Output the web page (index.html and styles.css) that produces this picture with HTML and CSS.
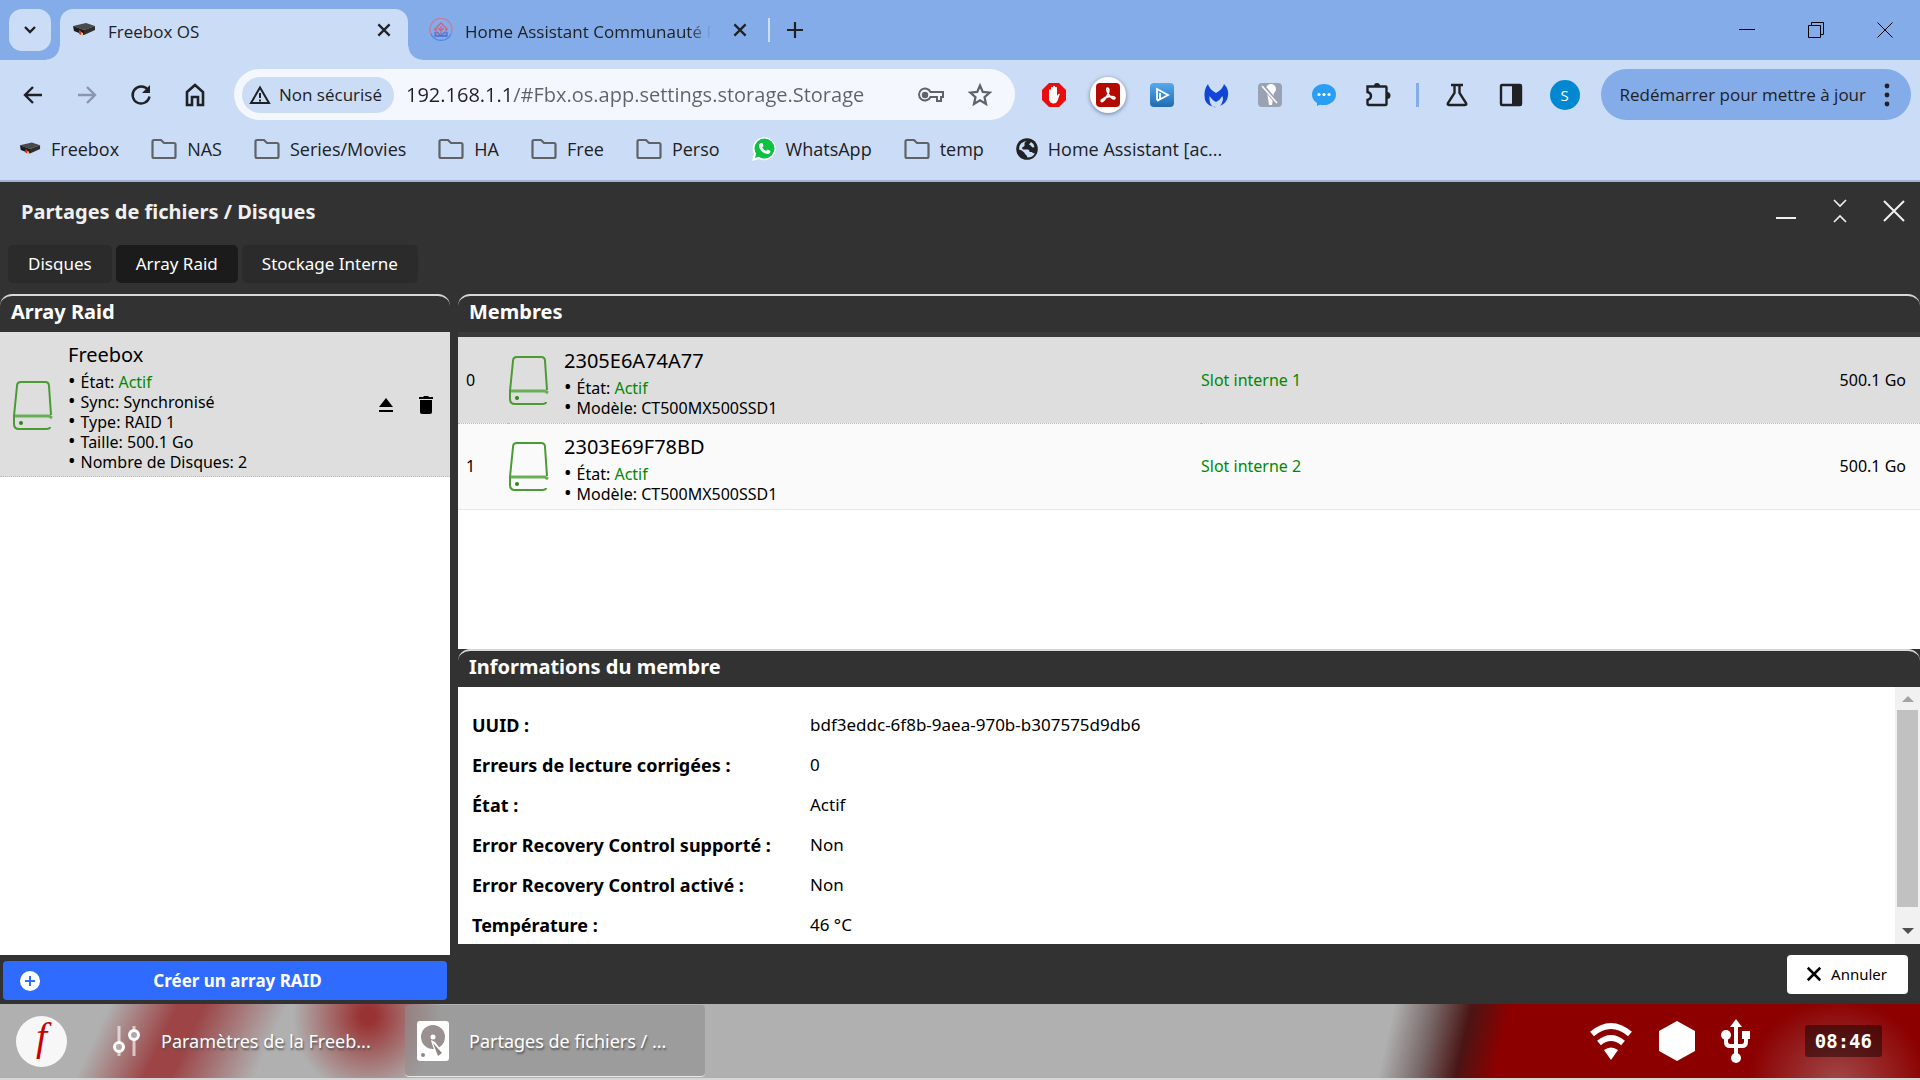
FILE: index.html
```html
<!DOCTYPE html>
<html lang="fr">
<head>
    <meta charset="UTF-8">
    <meta name="viewport" content="width=device-width, initial-scale=1.0">
    <title>Freebox OS</title>
    <link rel="stylesheet" href="styles.css">
</head>
<body>

    <!-- shared icons -->
    <svg class="defs" width="0" height="0">
        <symbol id="folder" viewBox="0 0 26 24">
            <path d="M3 3h7l3 3h10q1.500 0 1.500 1.500v12q0 1.500-1.500 1.500h-20q-1.500 0-1.500-1.500v-15q0-1.500 1.500-1.500z" fill="none" stroke="#5f6368" stroke-width="2.200"/>
        </symbol>
        <symbol id="box" viewBox="0 0 24 16">
            <path d="M1 4l13-3 9 3-11 4z" fill="#4a4a4a"/>
            <path d="M1 4l11 4v5l-10-4z" fill="#1c1c1c"/>
            <path d="M12 8l11-4v4l-11 5z" fill="#2e2e2e"/>
            <path d="M7 8l2 1v4l-2-1z" fill="#c33"/>
            <path d="M9 10l2 1v3l-2-1z" fill="#f0c030"/>
        </symbol>
        <symbol id="cross" viewBox="0 0 16 16">
            <path d="M3 3l10 10M13 3l-10 10" fill="none" stroke="currentColor" stroke-width="2"/>
        </symbol>
        <symbol id="disk" viewBox="0 0 42 50">
            <path d="M39 35L37 6q0-4-4-4H9q-4 0-4 4L2 36v8q0 5 5 5h27q4 0 4-2" fill="none" stroke="#4a9b34" stroke-width="2"/>
            <path d="M3 36h34l3 2" fill="none" stroke="#6aae58" stroke-width="3"/>
            <circle cx="9" cy="43" r="2" fill="#2a8a14"/>
        </symbol>
    </svg>

    <div class="tabstrip">
        <button class="tab-search" aria-label="Rechercher des onglets">
            <svg width="16" height="16" viewBox="0 0 16 16"><path d="M3 5l5 5 5-5" fill="none" stroke="currentColor" stroke-width="2.400"/></svg>
        </button>
        <div class="tab active">
            <svg width="24" height="16"><use href="#box"/></svg>
            <span class="tab-title">Freebox OS</span>
            <button class="icon-btn" aria-label="Fermer"><svg width="18" height="18"><use href="#cross"/></svg></button>
        </div>
        <div class="tab">
            <svg width="24" height="24" viewBox="0 0 24 24" fill="none" stroke-width="1.300">
                <path d="M2 16a11 11 0 1 1 20 0" stroke="#c97a96"/>
                <path d="M2 16a11 11 0 0 0 20 0" stroke="#4a86e8"/>
                <path d="M5 12l7-7 7 7M7 11v7h10v-7M9 10l3 3 3-3M12 8v9" stroke="#d0607c"/>
                <path d="M6 14v4h12v-4M12 18l-4-4M12 18l4-4" stroke="#3f7be0"/>
            </svg>
            <span class="tab-title fade">Home Assistant Communauté F</span>
            <button class="icon-btn" aria-label="Fermer"><svg width="18" height="18"><use href="#cross"/></svg></button>
        </div>
        <span class="tab-sep"></span>
        <button class="icon-btn new-tab" aria-label="Nouvel onglet">
            <svg width="18" height="18" viewBox="0 0 18 18"><path d="M9 1v16M1 9h16" stroke="currentColor" stroke-width="2.200"/></svg>
        </button>
        <div class="win-controls">
            <button class="icon-btn" aria-label="Réduire"><svg width="16" height="16"><path d="M0 7.500h16" stroke="#000"/></svg></button>
            <button class="icon-btn" aria-label="Restaurer"><svg width="16" height="16" fill="none" stroke="#000"><path d="M.5 3.500h12v12h-12zM3.500 3.500v-3h12v12h-3"/></svg></button>
            <button class="icon-btn" aria-label="Fermer la fenêtre"><svg width="16" height="16"><path d="M.5.5l15 15M15.500.5l-15 15" stroke="#000"/></svg></button>
        </div>
    </div>

    <div class="toolbar">
        <button class="nav-btn" aria-label="Retour"><svg width="22" height="22" viewBox="0 0 22 22"><path d="M20 11H3M11 3l-8 8 8 8" fill="none" stroke="currentColor" stroke-width="2.400"/></svg></button>
        <button class="nav-btn disabled" aria-label="Suivant"><svg width="22" height="22" viewBox="0 0 22 22"><path d="M2 11h17M11 3l8 8-8 8" fill="none" stroke="currentColor" stroke-width="2.400"/></svg></button>
        <button class="nav-btn" aria-label="Actualiser"><svg width="22" height="22" viewBox="0 0 22 22"><path d="M18 6a8.500 8.500 0 1 0 1.500 6.500" fill="none" stroke="currentColor" stroke-width="2.400"/><path d="M20 1v8h-8z" fill="currentColor"/></svg></button>
        <button class="nav-btn" aria-label="Accueil"><svg width="22" height="24" viewBox="0 0 22 24"><path d="M3 9l8-7 8 7v13h-5v-8H8v8H3z" fill="none" stroke="currentColor" stroke-width="2.600"/></svg></button>

        <div class="omnibox">
            <button class="chip">
                <svg width="22" height="20" viewBox="0 0 22 20"><path d="M11 2.500L20 18H2z" fill="none" stroke="currentColor" stroke-width="2"/><path d="M11 8v5M11 14.500v2" stroke="currentColor" stroke-width="2"/></svg>
                Non sécurisé
            </button>
            <input type="text" class="url" aria-label="Adresse" value="192.168.1.1/#Fbx.os.app.settings.storage.Storage">
            <button class="icon-btn grey" aria-label="Mots de passe"><svg width="28" height="16" viewBox="0 0 28 16"><path d="M13.500 5H26v5h-2v4h-4v-4h-6.500a6 6 0 1 1 0-5z" fill="none" stroke="currentColor" stroke-width="2"/><circle cx="8" cy="8" r="3.200" fill="currentColor"/></svg></button>
            <button class="icon-btn grey" aria-label="Favori"><svg width="26" height="26" viewBox="0 0 26 26"><path d="M13 3.500l2.800 6.400 6.900.6-5.200 4.600 1.500 6.800-6-3.600-6 3.600 1.500-6.800-5.200-4.600 6.900-.6z" fill="none" stroke="currentColor" stroke-width="2.200"/></svg></button>
        </div>

        <div class="extensions">
            <button class="ext" aria-label="AdBlock"><svg width="26" height="26" viewBox="0 0 26 26"><path d="M8 1h10l7 7v10l-7 7H8l-7-7V8z" fill="#e90d0d"/><path d="M8 13V8q1-1.500 2 0V5.500q1-1.500 2 0V4.500q1-1.500 2 0v1q1-1.500 2 0V14q1.500-3 2.800-2l-2 6q-1.300 3.500-4.300 3.500T8 18z" fill="#fff"/></svg></button>
            <button class="ext halo" aria-label="Adobe Acrobat"><svg width="26" height="26" viewBox="0 0 26 26"><rect x="1" y="1" width="24" height="24" rx="4" fill="#b30b00"/><path d="M12.500 6q2 0 1 4.500-2 6-6 9-2 .5-1-1.500 3-3 8-3.700 5 0 5.500 1.500 0 1.500-2 1-5-3.500-6-8.500-.5-2.300.5-2.300z" fill="none" stroke="#fff" stroke-width="1.700"/></svg></button>
            <button class="ext" aria-label="Lecteur"><svg width="26" height="26" viewBox="0 0 26 26"><defs><linearGradient id="pb" x2="0" y2="1"><stop stop-color="#55aaf0"/><stop offset="1" stop-color="#1f6bb0"/></linearGradient></defs><rect x="1" y="1" width="24" height="24" rx="4" fill="url(#pb)"/><path d="M8 18V7l11 6-11 6 3-2v-6" fill="none" stroke="#fff" stroke-width="1.800"/></svg></button>
            <button class="ext" aria-label="Malwarebytes"><svg width="26" height="26" viewBox="0 0 26 26"><path d="M5 2q1 5 8 9 7-4 8-9 5 5 4 12-1 7-8 10 4-5 2.500-10-2.500 4-6.500 6-4-2-6.500-6-.5 7 2.500 10 1 1.500 4 1-8 0-11-7Q0 8 5 2z" fill="#1145d6"/></svg></button>
            <button class="ext" aria-label="Micro"><svg width="26" height="26" viewBox="0 0 26 26"><rect x="1" y="1" width="24" height="24" rx="4" fill="#98a2b3"/><circle cx="14" cy="7" r="5" fill="#fff"/><path d="M10 10h7l-2 13h-3z" fill="#fff"/><path d="M5 3l16 19" stroke="#98a2b3" stroke-width="4"/><path d="M5 4l15 17" stroke="#fff" stroke-width="1.500"/></svg></button>
            <button class="ext" aria-label="Messages"><svg width="26" height="26" viewBox="0 0 26 26"><ellipse cx="13" cy="12.500" rx="12" ry="10.500" fill="#2a9df4"/><path d="M6 19v5l7-3z" fill="#2a9df4"/><g fill="#fff"><circle cx="8" cy="12.500" r="1.600"/><circle cx="13" cy="12.500" r="1.600"/><circle cx="18" cy="12.500" r="1.600"/></g></svg></button>
            <button class="ext" aria-label="Extensions"><svg width="26" height="26" viewBox="0 0 26 26"><path d="M3 4.500h17.500q1 0 1 1v16q0 1.500-1 1.500H4q-1.500 0-1.500-1.500V18q3.500-1 3.500-4T2.500 10V4.500z" fill="none" stroke="currentColor" stroke-width="2.400"/><path d="M9 4a3 3 0 0 1 6 0zM22 10a3.500 3.500 0 0 1 0 7z" fill="currentColor"/></svg></button>
            <span class="ext-sep"></span>
            <button class="ext" aria-label="Expérimentations"><svg width="26" height="26" viewBox="0 0 26 26"><path d="M7 3h12M10.500 3v8L4 21q-1 2 1 2h16q2 0 1-2l-6.500-10V3" fill="none" stroke="currentColor" stroke-width="2.400"/></svg></button>
            <button class="ext" aria-label="Panneau latéral"><svg width="26" height="26" viewBox="0 0 26 26"><rect x="3" y="3" width="20" height="20" rx="1" fill="none" stroke="currentColor" stroke-width="2.400"/><path d="M14 3h9v20h-9z" fill="currentColor"/></svg></button>
            <button class="avatar">S</button>
        </div>
        <button class="update-btn">
            Redémarrer pour mettre à jour
            <svg width="6" height="24" fill="currentColor"><circle cx="3" cy="3" r="2.400"/><circle cx="3" cy="12" r="2.400"/><circle cx="3" cy="21" r="2.400"/></svg>
        </button>
    </div>

    <nav class="bookmarks">
        <a href="#"><svg width="22" height="16"><use href="#box"/></svg>Freebox</a>
        <a href="#"><svg width="26" height="24"><use href="#folder"/></svg>NAS</a>
        <a href="#"><svg width="26" height="24"><use href="#folder"/></svg>Series/Movies</a>
        <a href="#"><svg width="26" height="24"><use href="#folder"/></svg>HA</a>
        <a href="#"><svg width="26" height="24"><use href="#folder"/></svg>Free</a>
        <a href="#"><svg width="26" height="24"><use href="#folder"/></svg>Perso</a>
        <a href="#"><svg width="24" height="24" viewBox="0 0 24 24"><path d="M0 24l2-7A11.500 11.500 0 1 1 7 22z" fill="#fff"/><circle cx="12.500" cy="11.500" r="10" fill="#0cc143"/><path d="M3 21l1.500-6 4 4z" fill="#0cc143"/><path d="M8.500 6l2 0 1 3-1.300 1.500q1.300 2.500 4 3.500l1.300-1.500 3 1.500q0 3-3 3-6-.5-8.500-7-.2-3 1.500-4z" fill="#fff"/></svg>WhatsApp</a>
        <a href="#"><svg width="26" height="24"><use href="#folder"/></svg>temp</a>
        <a href="#"><svg width="22" height="22" viewBox="0 0 22 22"><circle cx="11" cy="11" r="10.800" fill="#202124"/><path d="M12 2.500q-4 1-3.500 4 .5 2-2 2.500-1 1 .5 2.500h5q2 .5 1.500 2.500h2.500q1 2 3 1-2 4.500-7.500 4.500-.5-2.500-2.500-3.500-1-3-6-4.500Q2.500 4 12 2.500zM15 4q3 1.500 3.500 5-2 1-3-.5t-2.500-2z" fill="#cbdcf6"/></svg>Home Assistant [ac...</a>
    </nav>

    <div class="app">
        <header class="app-header">
            <h1>Partages de fichiers / Disques</h1>
            <div class="app-controls">
                <button class="icon-btn" aria-label="Réduire"><svg width="22" height="22"><path d="M1 18h20" stroke="currentColor" stroke-width="2"/></svg></button>
                <button class="icon-btn" aria-label="Restaurer"><svg width="22" height="26" viewBox="0 0 22 26" fill="none" stroke="currentColor" stroke-width="1.600"><path d="M5 2l6 6 6-6M5 24l6-6 6 6"/></svg></button>
                <button class="icon-btn" aria-label="Fermer"><svg width="22" height="22"><path d="M1 1l20 20M21 1L1 21" stroke="currentColor" stroke-width="2"/></svg></button>
            </div>
        </header>

        <div class="app-tabs">
            <button>Disques</button>
            <button class="selected">Array Raid</button>
            <button>Stockage Interne</button>
        </div>

        <div class="columns">
            <section class="left">
                <h2 class="panel-title">Array Raid</h2>
                <div class="array-list">
                    <div class="array-item">
                        <svg width="42" height="50"><use href="#disk"/></svg>
                        <div class="desc">
                            <h3>Freebox</h3>
                            <ul>
                                <li>État: <span class="ok">Actif</span></li>
                                <li>Sync: Synchronisé</li>
                                <li>Type: RAID 1</li>
                                <li>Taille: 500.1 Go</li>
                                <li>Nombre de Disques: 2</li>
                            </ul>
                        </div>
                        <button class="icon-btn" aria-label="Éjecter"><svg width="14" height="14"><path d="M7 0l7 9H0zM0 12h14v2H0z"/></svg></button>
                        <button class="icon-btn" aria-label="Supprimer"><svg width="14" height="18"><path d="M0 1h4l1-1h4l1 1h4v2H0zM1 4h12v12q0 2-2 2H3q-2 0-2-2z"/></svg></button>
                    </div>
                </div>
                <div class="left-footer">
                    <button class="create-btn">
                        <svg width="20" height="20"><circle cx="10" cy="10" r="10" fill="#fff"/><path d="M10 5v10M5 10h10" stroke="#306bff" stroke-width="2"/></svg>
                        <span>Créer un array RAID</span>
                    </button>
                </div>
            </section>

            <div class="right">
                <section class="members">
                    <h2 class="panel-title">Membres</h2>
                    <div class="strip"></div>
                    <table class="member-table">
                        <tr class="selected">
                            <td class="num">0</td>
                            <td class="pic"><svg width="42" height="50"><use href="#disk"/></svg></td>
                            <td class="desc">
                                <h3>2305E6A74A77</h3>
                                <ul>
                                    <li>État: <span class="ok">Actif</span></li>
                                    <li>Modèle: CT500MX500SSD1</li>
                                </ul>
                            </td>
                            <td class="ok">Slot interne 1</td>
                            <td class="size">500.1 Go</td>
                        </tr>
                        <tr>
                            <td class="num">1</td>
                            <td class="pic"><svg width="42" height="50"><use href="#disk"/></svg></td>
                            <td class="desc">
                                <h3>2303E69F78BD</h3>
                                <ul>
                                    <li>État: <span class="ok">Actif</span></li>
                                    <li>Modèle: CT500MX500SSD1</li>
                                </ul>
                            </td>
                            <td class="ok">Slot interne 2</td>
                            <td class="size">500.1 Go</td>
                        </tr>
                    </table>
                </section>

                <section class="info">
                    <h2 class="panel-title">Informations du membre</h2>
                    <div class="info-body">
                        <dl>
                            <dt>UUID :</dt><dd>bdf3eddc-6f8b-9aea-970b-b307575d9db6</dd>
                            <dt>Erreurs de lecture corrigées :</dt><dd>0</dd>
                            <dt>État :</dt><dd>Actif</dd>
                            <dt>Error Recovery Control supporté :</dt><dd>Non</dd>
                            <dt>Error Recovery Control activé :</dt><dd>Non</dd>
                            <dt>Température :</dt><dd>46 °C</dd>
                        </dl>
                        <div class="scrollbar">
                            <svg width="12" height="6"><path d="M6 0l6 6H0z" fill="#a3a3a3"/></svg>
                            <div class="thumb"></div>
                            <svg width="12" height="6"><path d="M0 0h12L6 6z" fill="#505050"/></svg>
                        </div>
                    </div>
                </section>

                <footer class="app-footer">
                    <button class="cancel-btn"><svg width="20" height="20"><use href="#cross"/></svg>Annuler</button>
                </footer>
            </div>
        </div>
    </div>

    <div class="taskbar">
        <button class="logo" aria-label="Menu Freebox"><span>f</span></button>
        <button class="task">
            <svg width="32" height="32" viewBox="0 0 32 32" fill="none"><path d="M7 1v30M22 1v30" stroke="#ffffffa0" stroke-width="3"/><circle cx="7" cy="22" r="4.500" stroke="#fff" stroke-width="3" fill="#b8a5a5"/><circle cx="22" cy="10" r="4.500" stroke="#fff" stroke-width="3" fill="#b8a5a5"/></svg>
            <span>Paramètres de la Freeb...</span>
        </button>
        <button class="task current">
            <svg width="32" height="40" viewBox="0 0 32 40"><rect width="32" height="40" rx="3" fill="#fff"/><circle cx="16" cy="16" r="12" fill="#999090"/><path d="M14 19l4 2 9 12-7 3-5-13z" fill="#fff"/><path d="M16 22l9 10-4 3z" fill="#8f8787"/><circle cx="16" cy="16" r="2.500" fill="#fff"/><circle cx="6" cy="34" r="2" fill="#8f8787"/></svg>
            <span>Partages de fichiers / ...</span>
        </button>
        <div class="tray">
            <svg width="44" height="38" viewBox="0 0 44 38"><path d="M3 12Q22-4 41 12" fill="none" stroke="#fff" stroke-width="6"/><path d="M10 21q12-10 24 0" fill="none" stroke="#fff" stroke-width="6"/><path d="M22 38l-7-10q7-5 14 0z" fill="#fff"/></svg>
            <svg width="36" height="40" viewBox="0 0 36 40"><path d="M18 0l18 10v20L18 40 0 30V10z" fill="#fff"/></svg>
            <svg width="30" height="44" viewBox="0 0 30 44"><path d="M15 6v32M5 16v7q0 4 4 4h12q4 0 4-4v-6" fill="none" stroke="#fff" stroke-width="4"/><path d="M15 0l6 8H9z" fill="#fff"/><circle cx="5" cy="16" r="5" fill="#fff"/><rect x="21" y="12" width="8" height="8" fill="#fff"/><circle cx="15" cy="39" r="5" fill="#fff"/></svg>
            <span class="clock">08:46</span>
        </div>
    </div>

</body>
</html>
```
FILE: styles.css
```css
* {
    box-sizing: border-box;
}
body {
    margin: 0;
    height: 100vh;
    display: flex;
    flex-direction: column;
    overflow: hidden;
    font-family: "Open Sans", sans-serif;
    font-size: 17px;
    color: #202124;
    background-color: #cbdcf6;
}
.defs {
    position: absolute;
}
button {
    font: inherit;
    color: inherit;
    border: none;
    background: none;
    padding: 0;
    cursor: pointer;
    white-space: nowrap;
}
svg {
    display: block;
    flex: none;
}
h1, h2, h3, ul, dl, dd {
    margin: 0;
    padding: 0;
}
.icon-btn {
    display: flex;
    align-items: center;
    justify-content: center;
}

/* browser tabs */
.tabstrip {
    display: flex;
    height: 60px;
    flex: none;
    padding: 9px 0 0 9px;
    background-color: #84ace9;
}
.tab-search {
    width: 42px;
    height: 42px;
    margin-right: 9px;
    border-radius: 13px;
    background-color: #cbdcf6;
    display: flex;
    align-items: center;
    justify-content: center;
}
.tab {
    position: relative;
    display: flex;
    align-items: center;
    width: 348px;
    padding: 0 15px 9px 12px;
    gap: 12px;
}
.tab.active {
    background-color: #cbdcf6;
    border-radius: 13px 13px 0 0;
}
.tab.active::before, .tab.active::after {
    content: "";
    position: absolute;
    bottom: 0;
    width: 14px;
    height: 14px;
    background: radial-gradient(circle at 0 0, transparent 13px, #cbdcf6 14px);
}
.tab.active::before {
    left: -14px;
}
.tab.active::after {
    right: -14px;
    background: radial-gradient(circle at 100% 0, transparent 13px, #cbdcf6 14px);
}
.tab + .tab {
    padding-left: 21px;
    padding-right: 7px;
}
.tab-title {
    flex: 1;
    white-space: nowrap;
    padding-top: 3px;
}
.fade {
    -webkit-mask-image: linear-gradient(90deg, #000 88%, transparent 97%);
    mask-image: linear-gradient(90deg, #000 88%, transparent 97%);
}
.tab-sep {
    width: 2px;
    height: 24px;
    margin-top: 9px;
    margin-left: 12px;
    background-color: #cbdcf6;
}
.new-tab {
    height: 42px;
    margin-left: 16px;
}
.win-controls {
    display: flex;
    gap: 53px;
    height: 42px;
    margin-left: auto;
    padding-right: 27px;
}

/* address bar */
.toolbar {
    display: flex;
    align-items: center;
    height: 69px;
    flex: none;
    padding: 0 9px 0 12px;
}
.nav-btn {
    width: 54px;
    height: 40px;
    display: flex;
    align-items: center;
    justify-content: center;
}
.nav-btn:first-child {
    width: 42px;
    margin-right: 6px;
}
.nav-btn.disabled {
    color: #8a96ad;
}
.omnibox {
    display: flex;
    align-items: center;
    flex: 1;
    height: 51px;
    margin-left: 12px;
    padding: 0 22px 0 8px;
    gap: 22px;
    border-radius: 26px;
    background-color: #f4f7fd;
}
.chip {
    display: flex;
    align-items: center;
    gap: 8px;
    height: 36px;
    padding: 0 12px 0 7px;
    border-radius: 18px;
    background-color: #cbdcf6;
}
.url {
    flex: 1;
    min-width: 0;
    margin-left: -10px;
    padding: 0;
    border: none;
    outline: none;
    font: 20px "Open Sans", sans-serif;
    /* host in black, path in grey */
    color: transparent;
    background: linear-gradient(90deg, #202124 104px, #5f6368 104px);
    -webkit-background-clip: text;
    background-clip: text;
}
.grey {
    color: #5f6368;
}
.extensions {
    display: flex;
    align-items: center;
    gap: 18px;
    margin: 0 18px 0 21px;
}
.ext {
    width: 36px;
    height: 36px;
    display: flex;
    align-items: center;
    justify-content: center;
}
.halo {
    border-radius: 50%;
    background-color: #fff;
    box-shadow: 0 1px 4px #6b7d9c;
}
.ext-sep {
    width: 3px;
    height: 24px;
    margin: 0 2px;
    background-color: #84ace9;
}
.avatar {
    width: 30px;
    height: 30px;
    margin: 0 3px;
    border-radius: 50%;
    background-color: #0288d1;
    color: #fff;
    font-size: 15px;
}
.update-btn {
    display: flex;
    align-items: center;
    gap: 18px;
    height: 51px;
    padding: 0 21px 0 19px;
    border-radius: 26px;
    background-color: #84ace9;
}

/* bookmarks */
.bookmarks {
    display: flex;
    align-items: center;
    gap: 32px;
    height: 53px;
    flex: none;
    padding: 0 19px 11px;
    border-bottom: 2px solid #9fb3d3;
    font-size: 18px;
}
.bookmarks a {
    display: flex;
    align-items: center;
    gap: 10px;
    color: #202124;
    text-decoration: none;
    white-space: nowrap;
}

/* Freebox OS window */
.app {
    flex: 1;
    min-height: 0;
    display: flex;
    flex-direction: column;
    background-color: #323232;
    font-family: "Noto Sans", sans-serif;
    color: #000;
}
.app-header {
    display: flex;
    align-items: center;
    justify-content: space-between;
    height: 58px;
    flex: none;
    padding: 0 15px 0 21px;
    color: #f0f0f0;
}
.app-header h1 {
    font-size: 20px;
}
.app-controls {
    display: flex;
    align-items: center;
    gap: 32px;
}
.app-tabs {
    display: flex;
    gap: 4px;
    padding: 5px 8px 11px;
}
.app-tabs button {
    height: 38px;
    padding: 0 20px 2px;
    border-radius: 5px;
    background-color: #2b2b2b;
    color: #fff;
}
.app-tabs .selected {
    background-color: #1b1b1b;
}
.columns {
    flex: 1;
    min-height: 0;
    display: flex;
    gap: 8px;
}
.left {
    width: 450px;
    display: flex;
    flex-direction: column;
}
.panel-title {
    height: 38px;
    flex: none;
    padding: 0 11px;
    border-top: 2px solid #d8d8d8;
    border-radius: 12px 12px 0 0;
    color: #fff;
    font-size: 20px;
    line-height: 32px;
}
.array-list {
    flex: 1;
    background-color: #fff;
}
.array-item {
    display: flex;
    align-items: center;
    padding: 6px 17px 4px 12px;
    gap: 14px;
    background-color: #dedede;
    border-bottom: 1px dotted #bbb;
}
.array-item .desc {
    flex: 1;
}
.array-item .icon-btn {
    margin-left: 12px;
}
.desc h3 {
    font-size: 20px;
    font-weight: normal;
    line-height: 34px;
}
.desc ul {
    list-style: none;
    font-size: 16px;
    line-height: 20px;
}
.desc li::before {
    content: "•";
    margin-right: 5px;
    font-size: 20px;
    line-height: 16px;
}
.ok {
    color: #008a00;
}
.left-footer {
    padding: 6px 3px 4px;
}
.create-btn {
    display: flex;
    align-items: center;
    width: 100%;
    height: 39px;
    padding: 0 12px 0 17px;
    border-radius: 4px;
    background-color: #306bff;
    color: #fff;
    font-weight: bold;
}
.create-btn span {
    flex: 1;
}
.right {
    flex: 1;
    min-width: 0;
    display: flex;
    flex-direction: column;
}
.members {
    flex: 6 1 0;
    display: flex;
    flex-direction: column;
    background: linear-gradient(#323232 43px, #fff 43px);
}
.strip {
    height: 5px;
    background-color: #3a3a3a;
}
.member-table {
    width: 100%;
    border-collapse: collapse;
    table-layout: fixed;
    font-size: 16px;
}
.member-table tr {
    height: 86px;
    background-color: #fafafa;
    border-bottom: 1px solid #e8e8e8;
}
.member-table .selected {
    background-color: #dedede;
    border-bottom: 1px dotted #bbb;
}
.member-table td {
    padding: 0;
}
.member-table .num {
    width: 50px;
    padding-left: 8px;
}
.member-table .pic {
    width: 56px;
}
.member-table .desc {
    width: 637px;
    padding-top: 2px;
}
.member-table .size {
    text-align: right;
    padding-right: 14px;
}
.info {
    flex: 5 1 0;
    min-height: 0;
    display: flex;
    flex-direction: column;
}
.info-body {
    flex: 1;
    min-height: 0;
    display: flex;
    overflow: hidden;
    background-color: #fff;
}
.info dl {
    flex: 1;
    display: grid;
    grid-template-columns: 338px 1fr;
    grid-auto-rows: 40px;
    align-items: center;
    padding: 18px 14px 0;
}
.info dt {
    font-size: 18px;
    font-weight: bold;
}
.scrollbar {
    width: 25px;
    display: flex;
    flex-direction: column;
    align-items: center;
    justify-content: space-between;
    padding: 9px 2px 10px;
    background-color: #f1f1f1;
}
.thumb {
    width: 21px;
    height: 197px;
    margin-bottom: 12px;
    background-color: #c1c1c1;
}
.app-footer {
    display: flex;
    align-items: center;
    justify-content: flex-end;
    height: 60px;
    flex: none;
    padding: 0 12px;
}
.cancel-btn {
    display: flex;
    align-items: center;
    gap: 7px;
    height: 39px;
    padding: 0 21px 0 17px;
    border-radius: 4px;
    background-color: #fff;
    font-size: 15px;
}

/* taskbar */
.taskbar {
    display: flex;
    align-items: center;
    height: 76px;
    flex: none;
    padding-left: 16px;
    border-bottom: 2px solid #d6d6d6;
    color: #fff;
    font-family: "Noto Sans", sans-serif;
    font-size: 18px;
    background:
        linear-gradient(115deg, transparent 15%, #9c4446 42%, #9c4446 52%, transparent 85%) 72px 0 / 220px 100% no-repeat,
        radial-gradient(ellipse 75px 80px at 368px 12px, #993232 10%, transparent),
        radial-gradient(ellipse 90px 85px at 1838px 80px, #a04a4a, transparent),
        linear-gradient(103deg, #b0b0b0 72%, #7a6a6a 74%, #4a1515 76%, #8c0000 78%);
}
.logo {
    width: 51px;
    height: 51px;
    border-radius: 50%;
    background-color: #f7f7f7;
    color: #c80000;
    font: italic 40px/40px "Liberation Serif", serif;
    padding-bottom: 8px;
}
.task {
    display: flex;
    align-items: center;
    gap: 20px;
    width: 300px;
    height: 72px;
    padding: 0 12px;
    text-shadow: 1px 2px 2px #555;
}
.logo + .task {
    margin-left: 33px;
    gap: 17px;
}
.current {
    margin-left: 5px;
    border-radius: 4px;
    border-bottom: 1px solid #e8e8e8;
    background-color: #90909099;
}
.tray {
    display: flex;
    align-items: center;
    gap: 26px;
    margin-left: auto;
    padding-right: 38px;
}
.clock {
    margin-left: 28px;
    padding: 0 10px;
    border-radius: 3px;
    background-color: #00000070;
    font: bold 19px/32px "DejaVu Sans Mono", monospace;
}
```
